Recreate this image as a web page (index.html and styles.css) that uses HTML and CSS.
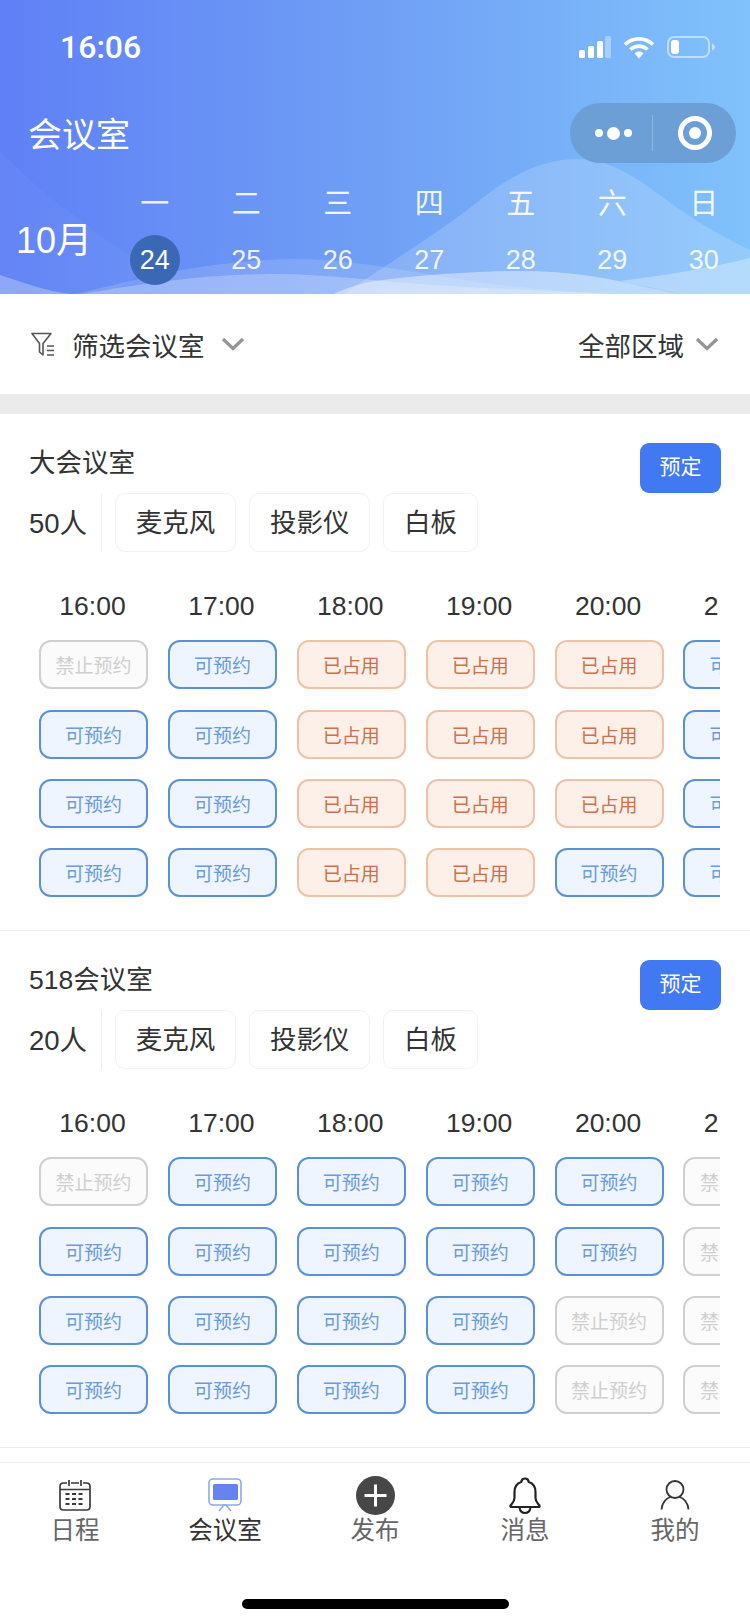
FILE: index.html
```html
<!DOCTYPE html>
<html lang="zh-CN">
<head>
<meta charset="UTF-8" />
<meta name="viewport" content="width=device-width, initial-scale=1" />
<title>会议室</title>
<link rel="stylesheet" href="styles.css">
</head>

<body>

<!-- Header with waves -->
<header class="header">
  <svg class="waves" viewBox="0 0 750 294" preserveAspectRatio="none" aria-hidden="true">
    <path d="M0 152C22 172 45 196 67 210C95 232 118 250 150 268L110 294H0Z" fill="rgba(255,255,255,.035)"/>
    <path d="M344 294C390 262 440 232 480 200C515 172 545 159 578 159C612 159 640 180 675 206C700 224 725 238 750 250V294Z" fill="rgba(255,255,255,.17)"/>
    <path d="M0 275C22 282 45 291 70 294H0Z" fill="rgba(255,255,255,.28)"/>
    <path d="M75 294C130 282 190 262 290 259C345 258 400 270 470 281C520 288 560 291 600 294Z" fill="rgba(255,255,255,.14)"/>
    <path d="M82 294C130 286 190 275 270 274C330 274 380 282 450 286C510 290 560 291 620 294Z" fill="rgba(255,255,255,.24)"/>
    <path d="M333 294C345 289 360 283 375 281C420 275 480 271 520 271C570 271 610 278 650 288C665 291 672 293 680 294Z" fill="rgba(255,255,255,.4)"/>
    <path d="M620 281C660 276 710 268 750 258V294H680C660 290 640 285 620 281Z" fill="rgba(255,255,255,.3)"/>
  </svg>

  <div class="status-bar">
    <span class="clock">16:06</span>
    <div class="status-icons">
      <svg width="32" height="22" viewBox="0 0 32 22" aria-hidden="true">
        <rect x="0" y="14" width="6" height="8" rx="1.5" fill="#fff"/>
        <rect x="9" y="10" width="6" height="12" rx="1.5" fill="#fff"/>
        <rect x="18" y="5" width="6" height="17" rx="1.5" fill="#fff"/>
        <rect x="26" y="0" width="6" height="22" rx="1.5" fill="rgba(255,255,255,.35)"/>
      </svg>
      <svg width="32" height="23" viewBox="0 0 32 23" aria-hidden="true">
        <path d="M2 8.5C10 1 22 1 30 8.5" fill="none" stroke="#fff" stroke-width="3.6"/>
        <path d="M7.5 13.5C12.5 9 19.5 9 24.5 13.5" fill="none" stroke="#fff" stroke-width="3.6"/>
        <path d="M11.5 17.2C14.5 14.8 17.5 14.8 20.5 17.2L16 22.5Z" fill="#fff"/>
      </svg>
      <svg width="49" height="22" viewBox="0 0 49 22" aria-hidden="true">
        <rect x="1" y="1" width="41" height="20" rx="6" fill="none" stroke="rgba(255,255,255,.5)" stroke-width="2"/>
        <rect x="4" y="4" width="8" height="14" rx="3" fill="#fff"/>
        <path d="M45 7.5C47 8.5 48 9.5 48 11C48 12.5 47 13.5 45 14.5Z" fill="rgba(255,255,255,.5)"/>
      </svg>
    </div>
  </div>

  <div class="nav-bar">
    <h1 class="nav-title">会议室</h1>
    <div class="capsule">
      <span class="capsule-dots"><i></i><i class="big"></i><i></i></span>
      <span class="capsule-line"></span>
      <span class="capsule-target"><i></i></span>
    </div>
  </div>

  <div class="calendar">
    <div class="month">10月</div>
    <div class="days">
      <span class="week">一</span><span class="week">二</span><span class="week">三</span><span class="week">四</span><span class="week">五</span><span class="week">六</span><span class="week">日</span>
      <span class="date today">24</span><span class="date">25</span><span class="date">26</span><span class="date">27</span><span class="date">28</span><span class="date">29</span><span class="date">30</span>
    </div>
  </div>
</header>

<!-- Filter row -->
<section class="filter">
  <div class="filter-item">
    <svg class="funnel" width="24" height="24" viewBox="0 0 24 24" aria-hidden="true">
      <path d="M1 1.5H20L12 11.5V23L8.5 20V11.5Z" fill="none" stroke="#555" stroke-width="1.6" stroke-linejoin="round"/>
      <path d="M16 14H23M16 18.5H23M16 23H23" fill="none" stroke="#555" stroke-width="1.6"/>
    </svg>
    <span>筛选会议室</span>
    <svg class="chevron" width="24" height="14" viewBox="0 0 24 14" aria-hidden="true"><path d="M2 2L12 11.5L22 2" fill="none" stroke="#959595" stroke-width="3.2"/></svg>
  </div>
  <div class="filter-item area">
    <span>全部区域</span>
    <svg class="chevron" width="24" height="14" viewBox="0 0 24 14" aria-hidden="true"><path d="M2 2L12 11.5L22 2" fill="none" stroke="#959595" stroke-width="3.2"/></svg>
  </div>
</section>

<div class="band"></div>

<!-- Room 1 -->
<section class="room">
  <div class="room-head">
    <div class="room-info">
      <h2 class="room-name">大会议室</h2>
      <div class="room-meta">
        <span class="people">50人</span>
        <span class="tag">麦克风</span><span class="tag">投影仪</span><span class="tag">白板</span>
      </div>
    </div>
    <button class="book">预定</button>
  </div>
  <div class="slots">
    <span class="hour">16:00</span><span class="hour">17:00</span><span class="hour">18:00</span><span class="hour">19:00</span><span class="hour">20:00</span><span class="hour">21:00</span>
    <span class="slot off">禁止预约</span><span class="slot free">可预约</span><span class="slot busy">已占用</span><span class="slot busy">已占用</span><span class="slot busy">已占用</span><span class="slot free">可预约</span>
    <span class="slot free">可预约</span><span class="slot free">可预约</span><span class="slot busy">已占用</span><span class="slot busy">已占用</span><span class="slot busy">已占用</span><span class="slot free">可预约</span>
    <span class="slot free">可预约</span><span class="slot free">可预约</span><span class="slot busy">已占用</span><span class="slot busy">已占用</span><span class="slot busy">已占用</span><span class="slot free">可预约</span>
    <span class="slot free">可预约</span><span class="slot free">可预约</span><span class="slot busy">已占用</span><span class="slot busy">已占用</span><span class="slot free">可预约</span><span class="slot free">可预约</span>
  </div>
</section>

<!-- Room 2 -->
<section class="room">
  <div class="room-head">
    <div class="room-info">
      <h2 class="room-name">518会议室</h2>
      <div class="room-meta">
        <span class="people">20人</span>
        <span class="tag">麦克风</span><span class="tag">投影仪</span><span class="tag">白板</span>
      </div>
    </div>
    <button class="book">预定</button>
  </div>
  <div class="slots">
    <span class="hour">16:00</span><span class="hour">17:00</span><span class="hour">18:00</span><span class="hour">19:00</span><span class="hour">20:00</span><span class="hour">21:00</span>
    <span class="slot off">禁止预约</span><span class="slot free">可预约</span><span class="slot free">可预约</span><span class="slot free">可预约</span><span class="slot free">可预约</span><span class="slot off">禁止预约</span>
    <span class="slot free">可预约</span><span class="slot free">可预约</span><span class="slot free">可预约</span><span class="slot free">可预约</span><span class="slot free">可预约</span><span class="slot off">禁止预约</span>
    <span class="slot free">可预约</span><span class="slot free">可预约</span><span class="slot free">可预约</span><span class="slot free">可预约</span><span class="slot off">禁止预约</span><span class="slot off">禁止预约</span>
    <span class="slot free">可预约</span><span class="slot free">可预约</span><span class="slot free">可预约</span><span class="slot free">可预约</span><span class="slot off">禁止预约</span><span class="slot off">禁止预约</span>
  </div>
</section>

<!-- Tab bar -->
<nav class="tabbar">
  <a class="tab">
    <span class="tab-icon">
      <svg width="32" height="32" viewBox="0 0 32 32" aria-hidden="true">
        <path d="M8 4H4.5Q1 4 1 7.5V27.5Q1 31 4.5 31H27.5Q31 31 31 27.5V7.5Q31 4 27.5 4H24M12 4H20M1 10.5H31" fill="none" stroke="#3a3a3a" stroke-width="1.7"/>
        <path d="M10 1V7M22 1V7" stroke="#3a3a3a" stroke-width="1.7"/>
        <path d="M6.5 15H25.5M6.5 20H25.5M6.5 25H25.5" stroke="#3a3a3a" stroke-width="2" stroke-dasharray="4 2.5"/>
      </svg>
    </span>
    <span>日程</span>
  </a>
  <a class="tab active">
    <span class="tab-icon">
      <svg width="34" height="34" viewBox="0 0 34 34" aria-hidden="true">
        <rect x="1" y="1" width="32" height="26" rx="4" fill="#fff" stroke="#8fa8e8" stroke-width="1.6"/>
        <rect x="5" y="6" width="25" height="16" rx="1.5" fill="#6683f0"/>
        <path d="M11 33L16 27H18L23 33" fill="none" stroke="#8fa8e8" stroke-width="1.4"/>
      </svg>
    </span>
    <span>会议室</span>
  </a>
  <a class="tab">
    <span class="tab-icon">
      <svg width="39" height="39" viewBox="0 0 39 39" aria-hidden="true">
        <circle cx="19.5" cy="19.5" r="19.5" fill="#474747"/>
        <path d="M19.5 8.5V30.5M8.5 19.5H30.5" stroke="#fff" stroke-width="3"/>
      </svg>
    </span>
    <span>发布</span>
  </a>
  <a class="tab">
    <span class="tab-icon">
      <svg width="32" height="37" viewBox="0 0 32 37" aria-hidden="true">
        <path d="M16 1.5C18 1.5 19.5 3 19.8 5C24.5 6.5 26.5 10.5 26.5 15V21C26.5 24.5 28.5 26 30.5 28.5Q31 30 29.5 30H2.5Q1 30 1.5 28.5C3.5 26 5.5 24.5 5.5 21V15C5.5 10.5 7.5 6.5 12.2 5C12.5 3 14 1.5 16 1.5Z" fill="none" stroke="#222" stroke-width="2.2" stroke-linejoin="round"/>
        <path d="M10.5 30.5C11 34 13 36 16 36C19 36 21 34 21.5 30.5" fill="none" stroke="#222" stroke-width="2"/>
      </svg>
    </span>
    <span>消息</span>
  </a>
  <a class="tab">
    <span class="tab-icon">
      <svg width="30" height="30" viewBox="0 0 30 30" aria-hidden="true">
        <circle cx="15" cy="9.5" r="8.5" fill="none" stroke="#333" stroke-width="1.8"/>
        <path d="M1.5 29.5C2 22.5 6.5 18 10.5 17M28.5 29.5C28 22.5 23.5 18 19.5 17" fill="none" stroke="#333" stroke-width="1.8"/>
      </svg>
    </span>
    <span>我的</span>
  </a>
  <span class="home-bar"></span>
</nav>

</body>
</html>
```

FILE: styles.css
```css
/* Global reset and base */
*, *::before, *::after {
  box-sizing: border-box;
}
html, body {
  margin: 0;
  padding: 0;
  width: 750px;
  height: 1624px;
  overflow: hidden;
  background: #fff;
  font-family: "Liberation Sans", "Noto Sans CJK SC", sans-serif;
  color: #333;
}

/* Header */
.header {
  position: relative;
  height: 294px;
  background: linear-gradient(90deg, #5f80f6 0%, #6f9ff5 50%, #80c2fb 100%);
  color: #fff;
}
.waves {
  position: absolute;
  top: 0;
  left: 0;
  width: 750px;
  height: 294px;
}
.status-bar {
  position: relative;
  height: 94px;
  display: flex;
  align-items: center;
  justify-content: space-between;
  padding: 0 34px 0 60px;
}
.clock {
  font-family: Roboto, sans-serif;
  font-size: 32px;
  font-weight: 500;
}
.status-icons {
  display: flex;
  align-items: center;
  gap: 12px;
}
.nav-bar {
  position: relative;
  height: 60px;
  margin-top: 9px;
  display: flex;
  align-items: center;
  justify-content: space-between;
  padding: 0 14px 0 28px;
}
.nav-title {
  margin: 0 0 2px;
  font-size: 34px;
  font-weight: 400;
}
.capsule {
  width: 166px;
  height: 60px;
  border-radius: 30px;
  background: #6b9fd6;
  display: flex;
  align-items: center;
}
.capsule-dots {
  width: 82px;
  display: flex;
  align-items: center;
  justify-content: center;
  gap: 4px;
  padding-left: 5px;
}
.capsule-dots i {
  width: 8px;
  height: 8px;
  border-radius: 50%;
  background: #fff;
}
.capsule-dots i.big {
  width: 13px;
  height: 13px;
}
.capsule-line {
  width: 1px;
  height: 36px;
  background: rgba(255, 255, 255, 0.25);
}
.capsule-target {
  width: 34px;
  height: 34px;
  margin-left: 25px;
  border: 5px solid #fff;
  border-radius: 50%;
  display: flex;
  align-items: center;
  justify-content: center;
}
.capsule-target i {
  width: 12px;
  height: 12px;
  border-radius: 50%;
  background: #fff;
}

/* Calendar */
.calendar {
  position: relative;
  margin-top: 21px;
  display: flex;
}
.month {
  width: 109px;
  padding: 37px 0 0 16px;
  font-size: 36px;
  line-height: 40px;
}
.days {
  display: grid;
  grid-template-columns: repeat(7, 91.5px);
  grid-template-rows: 40px 50px;
  row-gap: 11px;
  justify-items: center;
  align-items: center;
}
.week {
  font-size: 29px;
  line-height: 40px;
  color: rgba(255, 255, 255, 0.92);
}
.date {
  width: 50px;
  height: 50px;
  border-radius: 50%;
  display: flex;
  align-items: center;
  justify-content: center;
  font-size: 27px;
  color: rgba(255, 255, 255, 0.9);
}
.date.today {
  background: #3b68b4;
  color: #fff;
}

/* Filter row */
.filter {
  height: 100px;
  display: flex;
  align-items: center;
  justify-content: space-between;
  padding: 0 31px;
  font-size: 26.5px;
}
.filter-item {
  display: flex;
  align-items: center;
}
.funnel {
  margin-right: 17px;
}
.chevron {
  margin-left: 16px;
}
.area .chevron {
  margin-left: 11px;
}
.band {
  height: 20px;
  background: #ebebeb;
}

/* Rooms */
.room {
  height: 517px;
  padding: 29px 29px 0;
  border-bottom: 1px solid #eee;
}
.room-head {
  display: flex;
  justify-content: space-between;
  align-items: flex-start;
}
.room-name {
  margin: 0 0 10px;
  font-size: 26.5px;
  font-weight: 400;
  line-height: 40px;
}
.room-meta {
  display: flex;
  align-items: center;
  height: 59px;
}
.people {
  width: 73px;
  height: 59px;
  line-height: 62px;
  font-size: 27.5px;
  border-right: 1px solid #eee;
  margin-right: 13px;
}
.tag {
  height: 59px;
  padding: 0 19.8px;
  margin-right: 13px;
  line-height: 59px;
  font-size: 26.5px;
  border: 1px solid #f2f2f2;
  border-radius: 10px;
}
.book {
  width: 81px;
  height: 50px;
  padding: 0 0 7px;
  border: none;
  border-radius: 9px;
  background: #4179f3;
  color: #fff;
  font-family: inherit;
  font-size: 21px;
}

/* Time slots: the grid runs past the right edge and gets clipped */
.slots {
  width: 691px;
  margin-top: 34px;
  padding-left: 10px;
  overflow: hidden;
  display: grid;
  grid-template-columns: repeat(6, 109px);
  grid-template-rows: 34px;
  grid-auto-rows: 49px;
  column-gap: 19.9px;
  row-gap: 20.3px;
}
.hour {
  padding-right: 2px;
  font-size: 26.5px;
  text-align: center;
  line-height: 40px;
  white-space: nowrap;
}
.slot {
  display: flex;
  align-items: center;
  justify-content: center;
  border-radius: 12px;
  border: 2px solid;
  font-size: 19px;
  white-space: nowrap;
}
.slot.free {
  background: #eff5fe;
  border-color: #5a90d8;
  color: #6a9bdc;
}
.slot.busy {
  background: #fdf0e8;
  border-color: #efc2a8;
  color: #cf6f4b;
}
.slot.off {
  background: #fbfbfb;
  border-color: #cfcfcf;
  color: #cfcfcf;
}

/* Tab bar */
.tabbar {
  position: relative;
  height: 162px;
  margin-top: 14px;
  border-top: 1px solid #eee;
  display: grid;
  grid-template-columns: repeat(5, 150px);
  align-content: start;
  padding-top: 12px;
}
.tab {
  display: flex;
  flex-direction: column;
  align-items: center;
  font-size: 24.5px;
  line-height: 32px;
  color: #666;
}
.tab.active {
  color: #333;
}
.tab-icon {
  height: 40px;
  display: flex;
  align-items: center;
  justify-content: center;
}
.home-bar {
  position: absolute;
  left: 242px;
  top: 136px;
  width: 267px;
  height: 10px;
  border-radius: 5px;
  background: #000;
}
```
